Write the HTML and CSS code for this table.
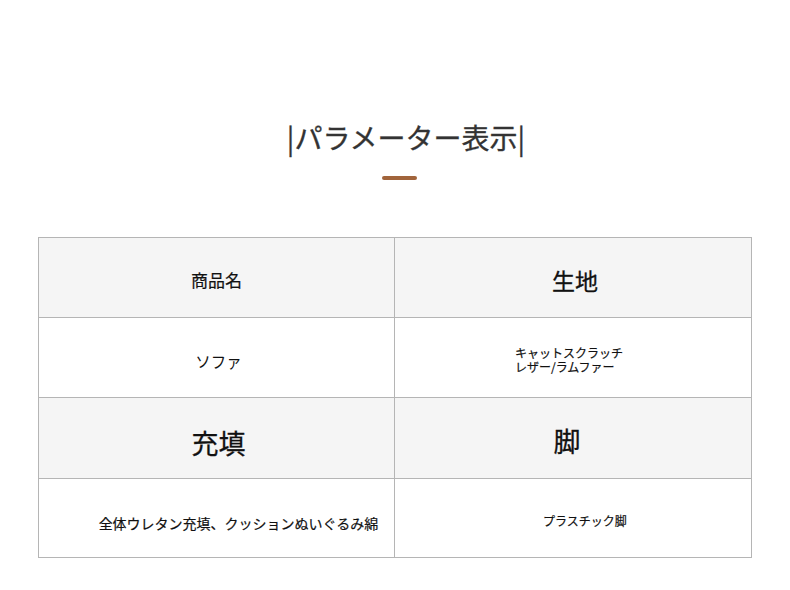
FILE: index.html
```html
<!DOCTYPE html>
<html lang="ja">
<head>
<meta charset="utf-8">
<link rel="stylesheet" href="styles.css">
</head>
<body>
<div class="page">
  <div class="heading">
    <h1 class="title">|パラメーター表示|</h1>
    <div class="bar"></div>
  </div>
  <div class="spec">
    <div class="cell head"><span class="t-name">商品名</span></div>
    <div class="cell head right"><span class="t-fabric">生地</span></div>
    <div class="cell"><span class="t-sofa">ソファ</span></div>
    <div class="cell right"><div class="t-fabric-val"><span class="line">キャットスクラッチ</span><span class="line">レザー/ラムファー</span></div></div>
    <div class="cell head tall"><span class="t-fill">充填</span></div>
    <div class="cell head tall right"><span class="t-leg">脚</span></div>
    <div class="cell last"><span class="t-fill-val">全体ウレタン充填、クッションぬいぐるみ綿</span></div>
    <div class="cell last right"><span class="t-leg-val">プラスチック脚</span></div>
  </div>
</div>
</body>
</html>
```

FILE: styles.css
```css
html, body {
  margin: 0;
  padding: 0;
  background: #ffffff;
}

body {
  font-family: "Noto Sans CJK JP", "Noto Sans", sans-serif;
  color: #111;
}

.page {
  width: 790px;
}

.heading {
  padding-top: 114px;
  display: flex;
  flex-direction: column;
  align-items: center;
}

.title {
  margin: 0 0 0 22px;
  font-size: 28px;
  font-weight: 400;
  line-height: 46px;
  color: #333;
  -webkit-text-stroke: 0.3px #333;
}

.bar {
  margin: 16px 0 0 8px;
  width: 35px;
  height: 4px;
  border-radius: 2px;
  background: #a1643b;
}

.spec {
  margin: 57px 0 0 38px;
  width: 712px;
  border: 1px solid #b5b5b5;
  display: grid;
  grid-template-columns: 356px 356px;
  grid-template-rows: 80px 80px 81px 78px;
}

.cell {
  display: flex;
  align-items: center;
  justify-content: center;
  border-bottom: 1px solid #b5b5b5;
  border-right: 1px solid #b5b5b5;
  background: #fff;
}

.cell.right {
  border-right: none;
}

.cell.last {
  border-bottom: none;
}

.cell.head {
  background: #f5f5f5;
}

.t-name {
  font-size: 17px;
  font-weight: 400;
  -webkit-text-stroke: 0.2px #111;
  padding-top: 4px;
}

.t-fabric {
  font-size: 23px;
  font-weight: 400;
  -webkit-text-stroke: 0.3px #111;
  padding: 4px 0 0 4px;
}

.t-sofa {
  font-size: 15.5px;
  padding-top: 7px;
  margin-left: 4px;
}

.t-fabric-val {
  display: flex;
  flex-direction: column;
  font-size: 12px;
  font-weight: 400;
  -webkit-text-stroke: 0.2px #111;
  margin-left: -8px;
  padding-top: 4px;
}

.t-fabric-val .line {
  display: block;
  height: 14px;
  line-height: 14px;
}

.t-fill {
  font-size: 27px;
  font-weight: 400;
  -webkit-text-stroke: 0.3px #111;
  padding-top: 9px;
  margin-left: 4px;
}

.t-leg {
  font-size: 27px;
  font-weight: 400;
  -webkit-text-stroke: 0.3px #111;
  padding-top: 4px;
  margin-left: -12px;
}

.t-fill-val {
  font-size: 14px;
  font-weight: 400;
  -webkit-text-stroke: 0.2px #111;
  padding-top: 9px;
  margin-left: 44px;
}

.t-leg-val {
  font-size: 12px;
  font-weight: 400;
  -webkit-text-stroke: 0.2px #111;
  padding-top: 4px;
  margin-left: 24px;
}
```
